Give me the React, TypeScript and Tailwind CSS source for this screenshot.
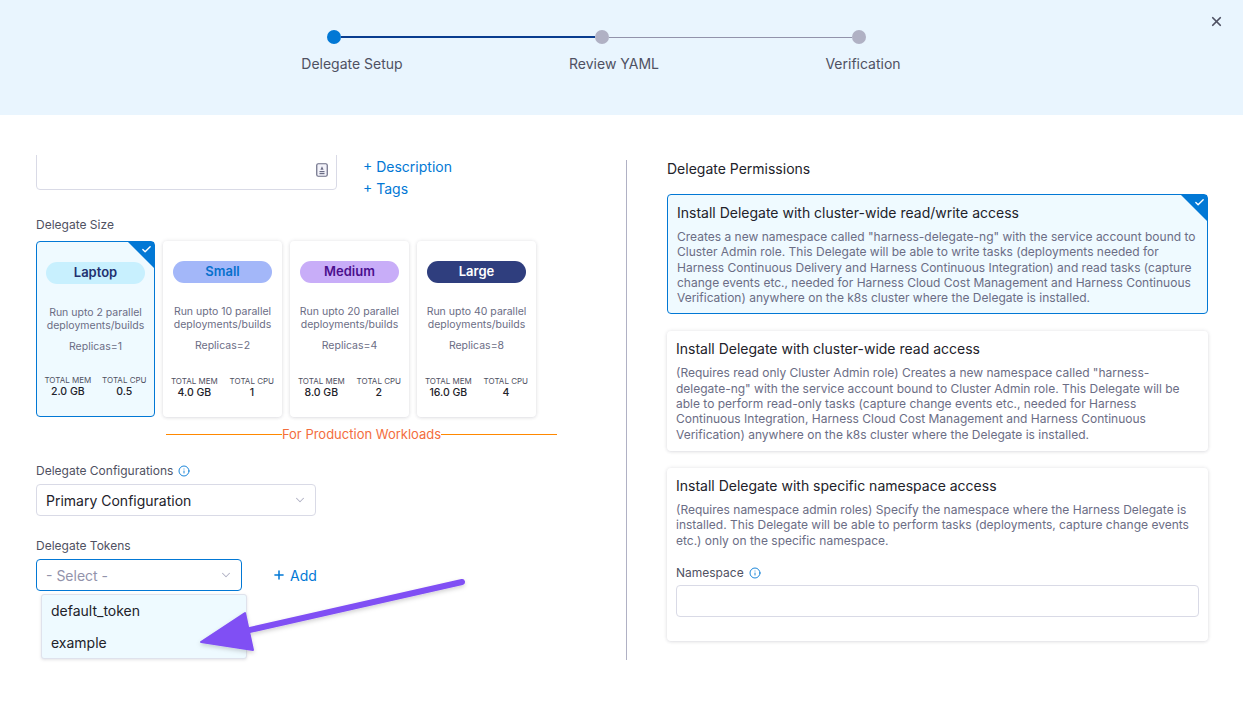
import React from 'react';
import { ChevronDown, Info, Plus, X, Check } from 'lucide-react';

const sizes = [
  { name: 'Laptop', pill: 'bg-[#c8f0fe] text-[#22306f]', builds: 2, replicas: 1, mem: '2.0 GB', cpu: '0.5', selected: true },
  { name: 'Small', pill: 'bg-[#a3b7f9] text-[#0670cc]', builds: 10, replicas: 2, mem: '4.0 GB', cpu: '1' },
  { name: 'Medium', pill: 'bg-[#c8adf8] text-[#4b0f8d]', builds: 20, replicas: 4, mem: '8.0 GB', cpu: '2' },
  { name: 'Large', pill: 'bg-[#2f3e7e] text-white', builds: 40, replicas: 8, mem: '16.0 GB', cpu: '4' },
];

const Corner = () => (
  <div className="absolute top-0 right-0 w-[26px] h-[26px] overflow-hidden">
    <div className="absolute top-0 right-0 w-0 h-0 border-t-[26px] border-l-[26px] border-t-[#0278d5] border-l-transparent" />
    <Check className="absolute top-[2px] right-[2px] w-[11px] h-[11px] text-white" strokeWidth={3} />
  </div>
);

const SizeCard = ({ s }: { s: (typeof sizes)[number] }) => (
  <div
    className={
      'relative w-[119px] h-[176px] rounded-[4px] flex flex-col items-center pt-[20px] ' +
      (s.selected
        ? 'border border-[#0278d5] bg-[#effaff]'
        : 'bg-white shadow-[0_0_4px_rgba(40,41,61,0.10),0_1px_3px_rgba(96,97,112,0.12)]')
    }
  >
    {s.selected && <Corner />}
    <div className={'w-[99px] h-[22px] rounded-full flex items-center justify-center text-[13px] font-semibold ' + s.pill}>
      {s.name}
    </div>
    <div className="mt-[22px] text-[10.5px] leading-[13px] text-[#6b6d85] text-center">
      Run upto {s.builds} parallel
      <br />
      deployments/builds
    </div>
    <div className="mt-[8px] text-[10.5px] leading-[13px] text-[#6b6d85]">Replicas={s.replicas}</div>
    <div className="mt-auto mb-[18px] w-full flex justify-around px-[2px]">
      <div className="flex flex-col items-center">
        <span className="text-[8px] leading-[10px] text-[#4f5162]">TOTAL MEM</span>
        <span className="text-[10.5px] leading-[13px] text-[#22222a] font-medium">{s.mem}</span>
      </div>
      <div className="flex flex-col items-center">
        <span className="text-[8px] leading-[10px] text-[#4f5162]">TOTAL CPU</span>
        <span className="text-[10.5px] leading-[13px] text-[#22222a] font-medium">{s.cpu}</span>
      </div>
    </div>
  </div>
);

const PermCard = ({
  title,
  children,
  selected,
  extra,
}: {
  title: string;
  children: React.ReactNode;
  selected?: boolean;
  extra?: React.ReactNode;
}) => (
  <div
    className={
      'relative rounded-[4px] px-[9px] pt-[7px] ' +
      (selected
        ? 'border border-[#0278d5] bg-[#effaff] pb-[8px]'
        : 'bg-white shadow-[0_0_4px_rgba(40,41,61,0.10),0_1px_3px_rgba(96,97,112,0.12)] pb-[9px]')
    }
  >
    {selected && <Corner />}
    <div className="text-[14px] leading-[21px] text-[#22222a]">{title}</div>
    <div className="mt-[6px] text-[12px] leading-[15.3px] text-[#6b6d85]">{children}</div>
    {extra}
  </div>
);

export default function App() {
  return (
    <div className="relative w-[1243px] h-[701px] bg-white font-['Inter',sans-serif] overflow-hidden">
      {/* header / stepper */}
      <div className="h-[115px] bg-[#e9f5fe] relative">
        <div className="flex items-center pt-[30px] pl-[327px]">
          <div className="w-[14px] h-[14px] rounded-full bg-[#0278d5]" />
          <div className="w-[254px] h-[2px] bg-[#0a3d8f]" />
          <div className="w-[14px] h-[14px] rounded-full bg-[#b0b1c4]" />
          <div className="w-[243px] h-[1px] bg-[#9293ab]" />
          <div className="w-[14px] h-[14px] rounded-full bg-[#b0b1c4]" />
        </div>
        <div className="flex mt-[10px] text-[14px] leading-[20px] text-[#4f5162]">
          <div className="ml-[252px] w-[200px] text-center">Delegate Setup</div>
          <div className="ml-[62px] w-[200px] text-center">Review YAML</div>
          <div className="ml-[49px] w-[200px] text-center">Verification</div>
        </div>
        <X className="absolute top-[14px] right-[19px] w-[15px] h-[15px] text-[#4f5162]" strokeWidth={2.8} />
      </div>

      {/* body */}
      <div className="flex">
        {/* left column */}
        <div className="relative w-[626px] pl-[36px] pt-[40px]">
          <div className="flex">
            <div className="h-[35px] w-[301px] overflow-hidden">
              <div className="relative -mt-[25px] h-[60px] border border-[#d9dae6] rounded-[4px] bg-white">
                <svg className="absolute right-[8px] top-[32px]" width="12" height="14" viewBox="0 0 12 14">
                  <rect x="0.75" y="0.75" width="10.5" height="12.5" rx="1.5" fill="#f3f3fa" stroke="#6b6d85" strokeWidth="1.2" />
                  <path d="M6 3.2 L7.6 6.8 H4.4 Z" fill="#6b6d85" />
                  <rect x="3.5" y="8" width="5" height="1.2" fill="#6b6d85" />
                  <rect x="3.5" y="10" width="5" height="1.2" fill="#6b6d85" />
                </svg>
              </div>
            </div>
            <div className="ml-[26px] mt-[1px] flex flex-col text-[14px] leading-[22px] text-[#0278d5]">
              <span>+ Description</span>
              <span>+ Tags</span>
            </div>
          </div>

          <div className="mt-[17px] text-[12px] leading-[16px] text-[#4f5162]">Delegate Size</div>
          <div className="mt-[8px] flex gap-[8px]">
            {sizes.map((s) => (
              <SizeCard key={s.name} s={s} />
            ))}
          </div>

          <div className="ml-[130px] w-[391px] mt-[8px] flex items-center">
            <div className="flex-1 h-[1px] bg-[#ff8800]" />
            <span className="text-[13px] leading-[18px] text-[#f36d3d]">For Production Workloads</span>
            <div className="flex-1 h-[1px] bg-[#ff8800]" />
          </div>

          <div className="mt-[20px] flex items-center gap-[5px] text-[12px] leading-[16px] text-[#4f5162]">
            Delegate Configurations
            <Info className="w-[12px] h-[12px] text-[#0278d5]" strokeWidth={1.8} />
          </div>
          <div className="mt-[5px] w-[280px] h-[32px] border border-[#d9dae6] rounded-[4px] flex items-center justify-between pl-[9px] pr-[8px]">
            <span className="text-[14px] text-[#22222a]">Primary Configuration</span>
            <ChevronDown className="w-[14px] h-[14px] text-[#b0b1c4]" strokeWidth={1.8} />
          </div>

          <div className="mt-[22px] text-[12px] leading-[16px] text-[#4f5162]">Delegate Tokens</div>
          <div className="mt-[5px] flex items-center">
            <div className="relative w-[206px] h-[32px] border border-[#0278d5] rounded-[4px] flex items-center justify-between pl-[9px] pr-[8px]">
              <span className="text-[14px] text-[#9293ab]">- Select -</span>
              <ChevronDown className="w-[14px] h-[14px] text-[#b0b1c4]" strokeWidth={1.8} />
              <div className="absolute left-[4px] top-[34px] w-[206px] h-[65px] bg-[#eefaff] border border-[#dfe2ec] rounded-[3px] shadow-[0_1px_3px_rgba(96,97,112,0.18)] flex flex-col text-[14px] text-[#22222a] pl-[9px]">
                <span className="leading-[32px]">default_token</span>
                <span className="leading-[32px]">example</span>
              </div>
            </div>
            <div className="ml-[30px] flex items-center gap-[4px] text-[14px] text-[#0278d5]">
              <Plus className="w-[14px] h-[14px]" strokeWidth={2.6} />
              Add
            </div>
          </div>
        </div>

        {/* divider */}
        <div className="mt-[45px] w-[1px] h-[500px] bg-[#b0b1c4]" />

        {/* right column */}
        <div className="w-[541px] ml-[40px] pt-[44px]">
          <div className="text-[14px] leading-[20px] text-[#22222a]">Delegate Permissions</div>
          <div className="mt-[15px] flex flex-col gap-[17px]">
            <PermCard selected title="Install Delegate with cluster-wide read/write access">
              Creates a new namespace called "harness-delegate-ng" with the service account bound to Cluster Admin role.
              This Delegate will be able to write tasks (deployments needed for Harness Continuous Delivery and Harness
              Continuous Integration) and read tasks (capture change events etc., needed for Harness Cloud Cost
              Management and Harness Continuous Verification) anywhere on the k8s cluster where the Delegate is installed.
            </PermCard>
            <PermCard title="Install Delegate with cluster-wide read access">
              (Requires read only Cluster Admin role) Creates a new namespace called "harness-delegate-ng" with the
              service account bound to Cluster Admin role. This Delegate will be able to perform read-only tasks (capture
              change events etc., needed for Harness Continuous Integration, Harness Cloud Cost Management and Harness
              Continuous Verification) anywhere on the k8s cluster where the Delegate is installed.
            </PermCard>
            <PermCard
              title="Install Delegate with specific namespace access"
              extra={
                <div className="mt-[17px] pb-[15px]">
                  <div className="flex items-center gap-[5px] text-[12px] leading-[16px] text-[#4f5162]">
                    Namespace
                    <Info className="w-[12px] h-[12px] text-[#0278d5]" strokeWidth={1.8} />
                  </div>
                  <div className="mt-[4px] h-[32px] border border-[#d9dae6] rounded-[4px]" />
                </div>
              }
            >
              (Requires namespace admin roles) Specify the namespace where the Harness Delegate is installed. This
              Delegate will be able to perform tasks (deployments, capture change events etc.) only on the specific
              namespace.
            </PermCard>
          </div>
        </div>
      </div>

      {/* annotation arrow */}
      <svg className="absolute left-0 top-0 pointer-events-none" width="1243" height="701">
        <defs>
          <filter id="sh" x="-10%" y="-10%" width="120%" height="130%">
            <feDropShadow dx="0" dy="2" stdDeviation="2" floodColor="#000" floodOpacity="0.18" />
          </filter>
        </defs>
        <g filter="url(#sh)">
          <line x1="462" y1="582" x2="232" y2="634" stroke="#8050f4" strokeWidth="6" strokeLinecap="round" />
          <path d="M201 642 L245 613 L253 650 Z" fill="#8050f4" stroke="#8050f4" strokeWidth="2" strokeLinejoin="round" />
        </g>
      </svg>
    </div>
  );
}
